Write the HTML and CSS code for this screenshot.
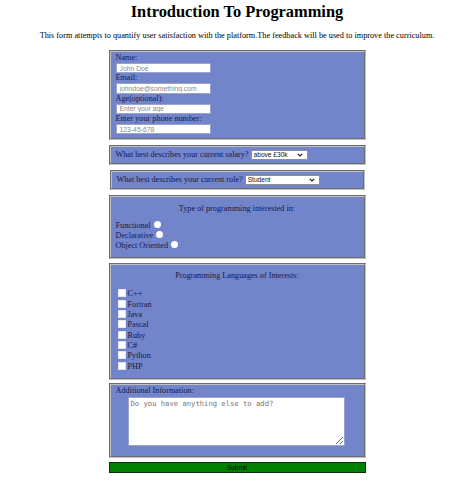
FILE: index.html
```html
<!DOCTYPE html>
<html lang="en">
<head>
    <meta charset="UTF-8">
    <meta name="viewport" content="width=device-width, initial-scale=1.0">
    <title>Introduction To Programming</title>
    <link rel="stylesheet" href="styles.css">
</head>
<body>
    <header>
        <h1 id="title">Introduction To Programming</h1>
        <p id="description">This form attempts to quantify user satisfaction with the platform.The feedback will be used to improve the curriculum.</p>
    </header>

    <form id="survey-form">
        <fieldset class="box contact">
            <label for="name" id="name-label">Name:</label>
            <input type="text" id="name" name="name" placeholder="John Doe" required>
            <label for="email" id="email-label">Email:</label>
            <input type="email" id="email" name="email" placeholder="johndoe@something.com" required>
            <label for="number" id="number-label">Age(optional):</label>
            <input type="number" id="number" name="age" min="10" max="99" placeholder="Enter your age">
            <label for="phone">Enter your phone number:</label>
            <input type="tel" id="phone" name="phone" placeholder="123-45-678">
        </fieldset>

        <fieldset class="box inline">
            <label for="salary">What best describes your current salary?</label>
            <select id="salary" name="salary" class="salary">
                <option value="low">below £30k</option>
                <option value="high" selected>above £30k</option>
            </select>
        </fieldset>

        <fieldset class="box inline role">
            <label for="dropdown">What best describes your current role?</label>
            <select id="dropdown" name="role" class="role-select">
                <option value="student">Student</option>
                <option value="job">Full Time Job</option>
                <option value="learner">Full Time Learner</option>
                <option value="other">Other</option>
            </select>
        </fieldset>

        <fieldset class="box choices">
            <p class="heading">Type of programming interested in:</p>
            <label>Functional <input type="radio" name="paradigm" value="functional"></label>
            <label>Declarative <input type="radio" name="paradigm" value="declarative"></label>
            <label>Object Oriented <input type="radio" name="paradigm" value="oop"></label>
        </fieldset>

        <fieldset class="box choices languages">
            <p class="heading">Programming Languages of Interests:</p>
            <label><input type="checkbox" name="lang" value="cpp"> C++</label>
            <label><input type="checkbox" name="lang" value="fortran"> Fortran</label>
            <label><input type="checkbox" name="lang" value="java"> Java</label>
            <label><input type="checkbox" name="lang" value="pascal"> Pascal</label>
            <label><input type="checkbox" name="lang" value="ruby"> Ruby</label>
            <label><input type="checkbox" name="lang" value="csharp"> C#</label>
            <label><input type="checkbox" name="lang" value="python"> Python</label>
            <label><input type="checkbox" name="lang" value="php"> PHP</label>
        </fieldset>

        <fieldset class="box extra">
            <label for="comments">Additional Information:</label>
            <textarea id="comments" name="comments" placeholder="Do you have anything else to add?"></textarea>
        </fieldset>

        <button type="submit" id="submit">Submit</button>
    </form>
</body>
</html>
```

FILE: styles.css
```css
body {
    font-family: 'Liberation Serif', 'Times New Roman', serif;
    margin: 0;
    padding-top: 2px;
    background: #ffffff;
    color: #000;
}

header {
    text-align: center;
}

#title {
    margin: 0;
    font-size: 16.4px;
    line-height: 19px;
}

#description {
    margin: 10px 0 9px;
    font-size: 8.25px;
    line-height: 10px;
}

#survey-form {
    width: 261px;
    margin: 0 auto;
}

.box {
    background: #7285cb;
    color: #14194a;
    font-size: 8.2px;
    line-height: 10px;
    margin: 0 2px 5px;
    padding: 1px 5px 4px;
    border: 2px groove #c0c0c0;
}

.contact label {
    display: block;
    height: 10px;
}

.contact input {
    display: block;
    box-sizing: border-box;
    width: 95px;
    height: 10.3px;
    padding: 0 3px;
    border: 1px solid #9aa3cc;
    font-family: 'Liberation Sans', Arial, sans-serif;
    font-size: 6.8px;
}

.contact input::placeholder {
    color: #8a8a8a;
}

.inline {
    padding: 3px 5px 3px;
}

.role {
    margin: 0 3px 5px;
}

select {
    appearance: none;
    box-sizing: border-box;
    height: 10px;
    padding: 0 10px 0 2px;
    border: 1px solid #8f8f8f;
    border-radius: 1px;
    background: #fff url("data:image/svg+xml,%3Csvg xmlns='http://www.w3.org/2000/svg' width='6' height='4' viewBox='0 0 6 4'%3E%3Cpath d='M0.8 0.8 L3 3 L5.2 0.8' fill='none' stroke='%23222' stroke-width='1.2'/%3E%3C/svg%3E") no-repeat right 4px center;
    color: #111;
    font-family: 'Liberation Sans', Arial, sans-serif;
    font-size: 6.6px;
    line-height: 8px;
    vertical-align: middle;
}

.salary {
    width: 57px;
}

.role-select {
    width: 75px;
}

.choices {
    margin-bottom: 4px;
    padding: 7px 5px 6px;
}

.choices .heading {
    margin: 0 0 7px;
    text-align: center;
}

.choices label {
    display: block;
}

input[type="radio"],
input[type="checkbox"] {
    appearance: none;
    margin: 0;
    width: 7px;
    height: 7px;
    background: #fff;
    vertical-align: 0;
}

input[type="radio"] {
    border-radius: 50%;
    margin-left: 1px;
}

.languages {
    margin-bottom: 3px;
    padding: 6px 5px 6px;
}

.languages .heading {
    margin-bottom: 8px;
}

.languages label {
    line-height: 10.3px;
    padding-left: 2px;
}

.languages input[type="checkbox"] {
    width: 8px;
    height: 8px;
    border: 1px solid #e6e6e6;
    vertical-align: -1px;
}

.extra {
    margin-bottom: 4px;
    padding: 1px 5px 10px;
}

.extra label {
    display: block;
}

textarea {
    display: block;
    box-sizing: border-box;
    width: 217px;
    height: 49px;
    margin: 1px 0 0 12px;
    padding: 1px 2px;
    border: 1px solid #9aa3cc;
    font-family: 'DejaVu Sans Mono', monospace;
    font-size: 7.2px;
    resize: vertical;
}

#submit {
    display: block;
    box-sizing: border-box;
    width: 257px;
    height: 11px;
    margin: 0 2px;
    padding: 0;
    background: #008000;
    border: 1px solid #0c2a0c;
    font-family: 'Liberation Sans', Arial, sans-serif;
    font-size: 6.5px;
    line-height: 9px;
    color: #000;
}
```
